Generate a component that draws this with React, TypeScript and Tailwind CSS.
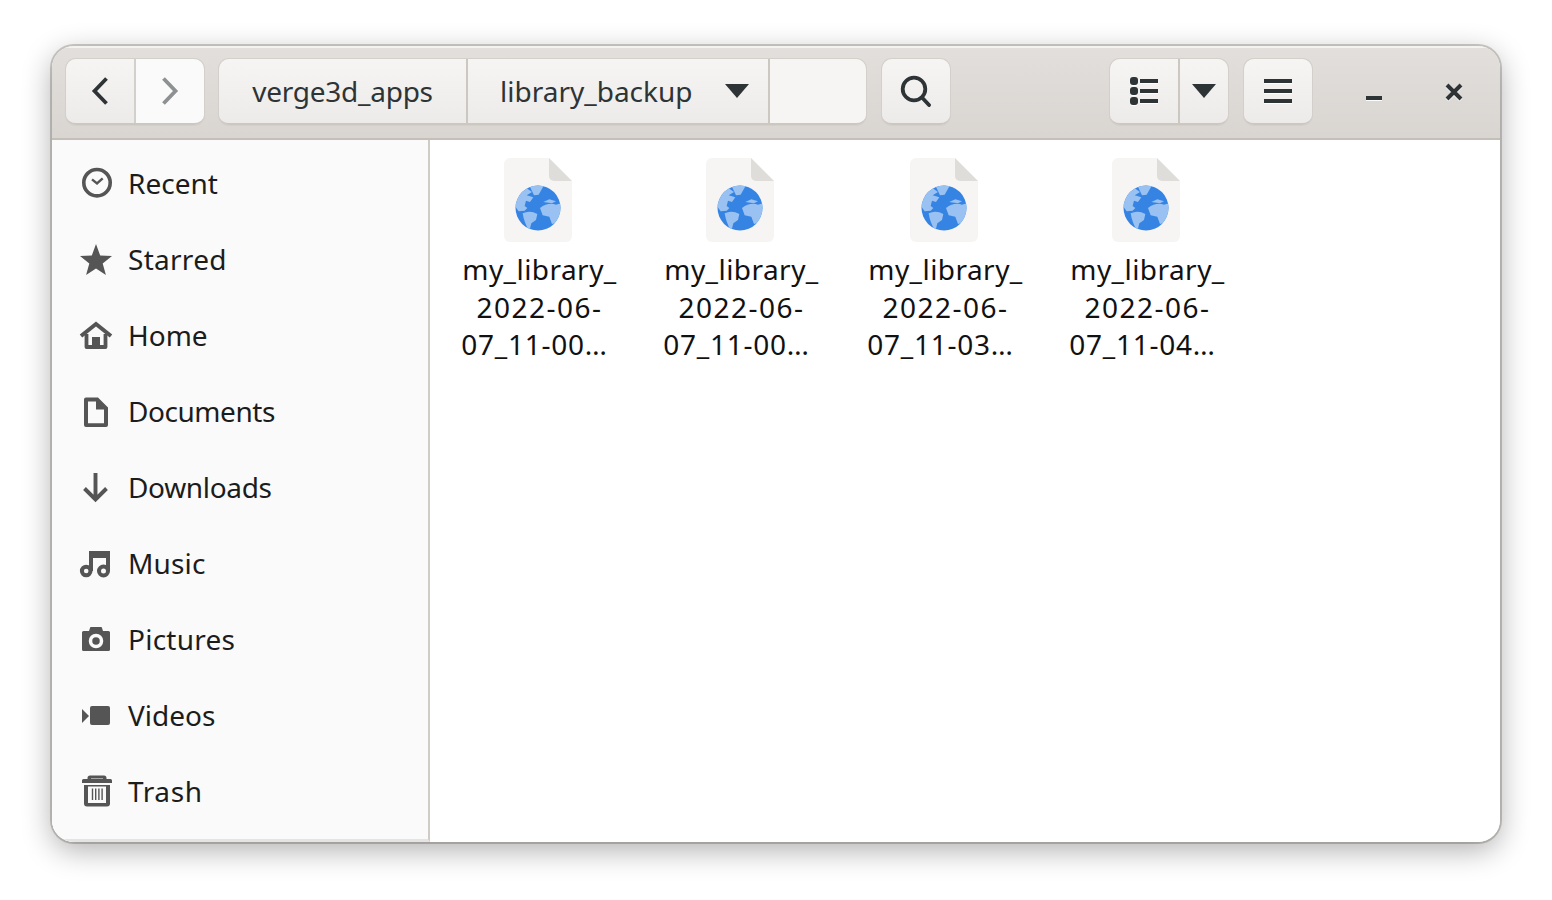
const font = { fontFamily: '"Noto Sans", sans-serif' };

const places = [
  { name: "Recent", icon: <RecentIcon />, track: "" },
  { name: "Starred", icon: <StarIcon />, track: "tracking-[0.28px]" },
  { name: "Home", icon: <HomeIcon />, track: "" },
  { name: "Documents", icon: <DocIcon />, track: "tracking-[-0.44px]" },
  { name: "Downloads", icon: <DownIcon />, track: "tracking-[-0.33px]" },
  { name: "Music", icon: <MusicIcon />, track: "tracking-[0.15px]" },
  { name: "Pictures", icon: <CameraIcon />, track: "tracking-[0.25px]" },
  { name: "Videos", icon: <VideoIcon />, track: "" },
  { name: "Trash", icon: <TrashIcon />, track: "tracking-[0.6px]" },
];

const files = ["07_11-00…", "07_11-00…", "07_11-03…", "07_11-04…"];

function Ico({ children }: { children: React.ReactNode }) {
  return (
    <svg viewBox="0 0 32 32" className="h-8 w-8 shrink-0 overflow-visible">
      {children}
    </svg>
  );
}

function RecentIcon() {
  return (
    <Ico>
      <circle cx="17" cy="15.700" r="13.200" fill="none" stroke="#555" strokeWidth="3.600" />
      <path d="M12 12.400l5 4 5.700-5" fill="none" stroke="#555" strokeWidth="2.400" />
    </Ico>
  );
}
function StarIcon() {
  return (
    <Ico>
      <path d="M16 1l4.200 11.500 11.800.5-9.300 7.500 3.200 11.500-9.900-6.600-9.900 6.600 3.200-11.500L0 13l11.800-.5z" fill="#555" />
    </Ico>
  );
}
function HomeIcon() {
  return (
    <Ico>
      <path d="M1 17L16 5l15 12" fill="none" stroke="#555" strokeWidth="4" />
      <path d="M6.500 15v13h19V15" fill="none" stroke="#555" strokeWidth="3.800" strokeLinejoin="round" />
      <rect x="12" y="18" width="8" height="10" fill="#555" />
    </Ico>
  );
}
function DocIcon() {
  return (
    <Ico>
      <path d="M4 4.500a2 2 0 0 1 2-2h12l10 10V30a2 2 0 0 1-2 2H6a2 2 0 0 1-2-2V4.500zm4 2v21.700h16V14.500h-8v-8H8z" fill="#555" fillRule="evenodd" />
    </Ico>
  );
}
function DownIcon() {
  return (
    <Ico>
      <path d="M15.500 2v25M4.500 17.500l11 11 11-11" fill="none" stroke="#555" strokeWidth="3.900" />
    </Ico>
  );
}
function MusicIcon() {
  return (
    <Ico>
      <path d="M9 4h21v20h-4V11H13v13H9z" fill="#555" />
      <circle cx="6.200" cy="24" r="4.300" fill="none" stroke="#555" strokeWidth="4" />
      <circle cx="23.500" cy="24" r="4.500" fill="none" stroke="#555" strokeWidth="4" />
    </Ico>
  );
}
function CameraIcon() {
  return (
    <Ico>
      <path d="M3.500 8H9l1-3a1 1 0 0 1 1-1h10a1 1 0 0 1 1 1l1 3h5.500A1.500 1.500 0 0 1 30 9.500v17a1.500 1.500 0 0 1-1.500 1.500h-25A1.500 1.500 0 0 1 2 26.500v-17A1.500 1.500 0 0 1 3.500 8z" fill="#555" />
      <circle cx="16" cy="18" r="5.500" fill="none" stroke="#fafafa" strokeWidth="3.500" />
    </Ico>
  );
}
function VideoIcon() {
  return (
    <Ico>
      <path d="M2 10l7 7-7 7z" fill="#555" />
      <rect x="10" y="7" width="20" height="19" rx="2" fill="#555" />
    </Ico>
  );
}
function TrashIcon() {
  return (
    <Ico>
      <path d="M3.500 4H7.500V3A2.500 2.500 0 0 1 10 .5h14A2.500 2.500 0 0 1 26.500 3v1h4A1.500 1.500 0 0 1 32 5.500V8H2V5.500A1.500 1.500 0 0 1 3.500 4zM11 4h12V3.500H11z" fill="#555" fillRule="evenodd" />
      <path d="M4 10h26v18.500a3 3 0 0 1-3 3H7a3 3 0 0 1-3-3V10zm4 1.500v16.500h18V11.500H8z" fill="#555" fillRule="evenodd" />
      <path d="M11.800 13.500h1.400v11.500h-1.400zM15 13.500h1.400v11.500H15zM18.200 13.500h1.400v11.500h-1.400zM21.400 13.500h1.400v11.500h-1.400z" fill="#555" />
    </Ico>
  );
}

function WebFile() {
  return (
    <svg viewBox="0 0 68 84" className="h-[84px] w-[68px]">
      <defs>
        <clipPath id="globe">
          <circle cx="34" cy="50" r="22.500" />
        </clipPath>
      </defs>
      <path d="M6 0h39l23 23v55a6 6 0 0 1-6 6H6a6 6 0 0 1-6-6V6a6 6 0 0 1 6-6z" fill="#f6f5f4" />
      <path d="M45 0l23 23H50a5 5 0 0 1-5-5z" fill="#deddda" />
      <circle cx="34" cy="50" r="22.500" fill="#3584e4" />
      <g clipPath="url(#globe)">
        <g transform="translate(6 22) scale(.3333)" fill="#99c1f1">
          <path d="M10 72Q22 38 46 22L66 36 50 46 70 52 60 66 48 62 44 78 52 84 44 92 26 94z" />
          <path d="M56 12Q78 8 102 16L86 44 72 46z" />
          <path d="M38 100Q60 90 82 102L78 120 64 130 58 154Q42 128 38 100z" />
          <path d="M90 84Q114 66 138 74L160 68 158 104 140 128 126 132 118 110 98 106z" />
          <path d="M100 66l18-8 20 6-12 6z" />
        </g>
      </g>
    </svg>
  );
}

function ToolButton({ children, className }: { children: React.ReactNode; className?: string }) {
  return (
    <button
      className={
        "flex h-full items-center justify-center bg-gradient-to-b from-[#f6f5f4] to-[#edebe9] " +
        (className ?? "")
      }
    >
      {children}
    </button>
  );
}

function Caret() {
  return (
    <svg viewBox="0 0 24 14" className="h-[14px] w-6">
      <path d="M0 0h24L12 14z" fill="#2e3436" />
    </svg>
  );
}

const group = "flex h-[66px] overflow-hidden rounded-[10px] border-b-2 border-[#cdc7c2] shadow-[0_0_0_1px_#d3cfca]";
const lip = "drop-shadow-[0_1px_0_rgba(255,255,255,0.9)]";

export default function App() {
  return (
    <div className="h-[900px] w-[1552px] overflow-hidden bg-white pl-[52px] pt-[46px]" style={font}>
      <div className="flex h-[796px] w-[1448px] flex-col overflow-hidden rounded-[22px] shadow-[0_8px_30px_rgba(0,0,0,0.32),0_0_0_2px_#d2cfcb]">
        {/* HEADER */}
        <div className="flex h-[94px] shrink-0 items-center border-b-2 border-[#c5bfb9] bg-gradient-to-b from-[#e2dfdc] to-[#d9d5d1] pl-[14px] shadow-[inset_0_2px_0_#f4f3f1]">
          <div className={group}>
            <ToolButton className="w-[70px] border-r-2 border-[#d3cfca]">
              <svg viewBox="0 0 20 32" className="h-8 w-5">
                <path d="M16.500 3.500L4.500 16l12 12.500" fill="none" stroke="#2e3436" strokeWidth="3.800" />
              </svg>
            </ToolButton>
            <button className="flex w-[68px] items-center justify-center bg-[#fafafa]">
              <svg viewBox="0 0 20 32" className="h-8 w-5">
                <path d="M3.500 3.500L15.500 16l-12 12.500" fill="none" stroke="#8e9192" strokeWidth="3.800" />
              </svg>
            </button>
          </div>

          <div className={group + " ml-[15px] text-[28px] text-[#2e3436]"}>
            <ToolButton className="w-[249px] border-r-2 border-[#cdc7c2] tracking-[-0.25px]">verge3d_apps</ToolButton>
            <ToolButton className="w-[302px] justify-start! gap-[32px] border-r-2 border-[#cdc7c2] pl-[32px]">
              library_backup
              <Caret />
            </ToolButton>
            <div className="w-[96px] bg-[#f6f5f4]" />
          </div>

          <div className={group + " ml-[16px]"}>
            <ToolButton className="w-[68px] pr-[3px]">
              <svg viewBox="0 0 32 32" className="h-8 w-8">
                <circle cx="15" cy="14" r="11.300" fill="none" stroke="#2e3436" strokeWidth="3.800" />
                <path d="M23 22.500l7 7.500" fill="none" stroke="#2e3436" strokeWidth="3.800" strokeLinecap="round" />
              </svg>
            </ToolButton>
          </div>

          <div className={group + " ml-[160px]"}>
            <ToolButton className="w-[70px] border-r-2 border-[#cdc7c2]">
              <svg viewBox="0 0 28 28" className={"h-7 w-7 " + lip}>
                <rect x="0" y="0" width="8" height="8" rx="3" fill="#2e3436" />
                <rect x="0" y="10" width="8" height="8" rx="3" fill="#2e3436" />
                <rect x="0" y="20" width="8" height="8" rx="3" fill="#2e3436" />
                <path d="M10 2h18v4H10zM10 12h18v4H10zM10 22h18v4H10z" fill="#2e3436" />
              </svg>
            </ToolButton>
            <ToolButton className="w-[48px]">
              <Caret />
            </ToolButton>
          </div>

          <div className={group + " ml-[16px]"}>
            <ToolButton className="w-[68px]">
              <svg viewBox="0 0 28 28" className={"h-7 w-7 " + lip}>
                <path d="M0 2h28v4H0zM0 12h28v4H0zM0 22h28v4H0z" fill="#2e3436" />
              </svg>
            </ToolButton>
          </div>

          <div className="ml-[54px] flex w-[16px] items-end pt-[12px]">
            <div className={"h-1 w-4 bg-[#2e3436] " + lip} />
          </div>
          <div className="ml-[63px]">
            <svg viewBox="0 0 18 18" className={"h-[18px] w-[18px] " + lip}>
              <path d="M2 2l14 14M16 2L2 16" stroke="#2e3436" strokeWidth="4" />
            </svg>
          </div>
        </div>

        {/* BODY */}
        <div className="flex min-h-0 flex-1 bg-white">
          <div className="flex w-[378px] shrink-0 flex-col border-r-2 border-b-[3px] border-r-[#cfccc6] border-b-[#e4e4e4] bg-[#fafafa] pt-[5px]">
            {places.map((p) => (
              <div key={p.name} className="flex h-[76px] items-center gap-[16px] pl-[28px] text-[28px] text-[#1c1c1c]">
                {p.icon}
                <span className={p.track}>{p.name}</span>
              </div>
            ))}
          </div>

          <div className="grid h-fit flex-1 grid-cols-[202px_202px_206px_198px] pl-[7px] pt-[18px]">
            {files.map((line, i) => (
              <div key={i} className="flex flex-col items-center">
                <WebFile />
                <div className="mt-[9px] w-full whitespace-nowrap text-center text-[28px] leading-[37.500px] text-[#111]">
                  <div className="pl-[3px] tracking-[0.45px]">my_library_</div>
                  <div className="pl-[3px] tracking-[1.5px]">2022-06-</div>
                  <div className="pr-[7px] tracking-[0.75px]">{line}</div>
                </div>
              </div>
            ))}
          </div>
        </div>
      </div>
    </div>
  );
}
